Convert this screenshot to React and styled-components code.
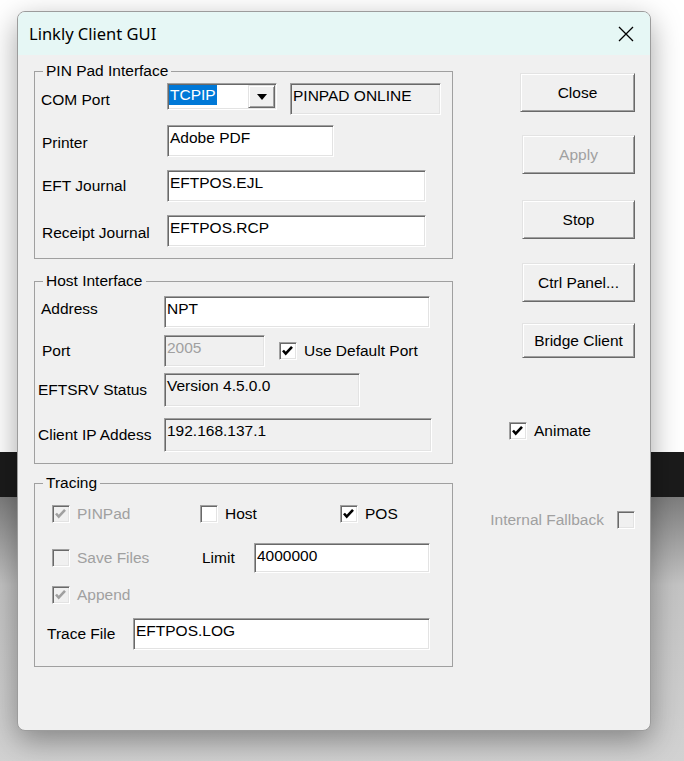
import React from 'react';
import styled, { createGlobalStyle } from 'styled-components';

const Global = createGlobalStyle`
  html, body { margin: 0; padding: 0; }
  body {
    width: 684px;
    height: 761px;
    overflow: hidden;
    background: linear-gradient(180deg, #ffffff 0, #ffffff 452px, #1b1b1b 452px, #1b1b1b 497px, #7e7e7e 497px, #c4c4c4 585px, #d2d2d2 761px);
    font-family: "Liberation Sans", Arial, sans-serif;
    font-size: 15.5px;
    color: #000;
  }
`;

const Page = styled.div`
  padding: 11px 0 0 17px;
`;

const Window = styled.div`
  box-sizing: border-box;
  width: 634px;
  height: 720px;
  border: 1px solid #9c9c9c;
  border-radius: 8px;
  background: #f0f0f0;
  box-shadow: 0 10px 30px rgba(0, 0, 0, 0.36);
  overflow: hidden;
  display: flex;
  flex-direction: column;
`;

const TitleBar = styled.div`
  flex: none;
  height: 43px;
  display: flex;
  align-items: center;
  justify-content: space-between;
  padding: 0 16px 0 11px;
  background: #e6f7f5;
`;

const Title = styled.span`
  font-family: "Noto Sans", "Open Sans", sans-serif;
  font-size: 16.5px;
  color: #000;
`;

const CloseX = styled.svg`
  width: 16px;
  height: 16px;
  display: block;
`;

const Body = styled.div`
  flex: 1;
  display: flex;
  justify-content: space-between;
  padding: 0 15px 0 16px;
`;

const LeftCol = styled.div`
  width: 419px;
  display: flex;
  flex-direction: column;
`;

const RightCol = styled.div`
  width: 150px;
  display: flex;
  flex-direction: column;
  align-items: flex-end;
`;

const Group = styled.div`
  margin-top: ${p => p.$mt}px;
  border: 1px solid #a0a0a0;
  padding-bottom: ${p => p.$pb}px;
`;

const GroupTitle = styled.div`
  width: fit-content;
  margin: -10px 0 0 8px;
  padding: 0 3px;
  background: #f0f0f0;
  line-height: 18px;
`;

const Row = styled.div`
  display: flex;
  align-items: center;
  height: ${p => p.$h}px;
  margin-top: ${p => p.$mt}px;
  padding-left: ${p => p.$pl}px;
`;

const Label = styled.span`
  flex: none;
  width: ${p => (p.$w ? `${p.$w}px` : 'auto')};
  margin-left: ${p => p.$ml || 0}px;
  margin-top: ${p => p.$nudge || 0}px;
  white-space: nowrap;
  color: ${p => (p.$disabled ? '#a0a0a0' : '#000')};
`;

const sunken = `
  border: 1px solid;
  border-color: #a0a0a0 #ffffff #ffffff #a0a0a0;
  box-shadow: inset 1px 1px 0 #696969, inset -1px -1px 0 #e3e3e3;
`;

const raised = `
  border: 1px solid;
  border-color: #e3e3e3 #696969 #696969 #e3e3e3;
  box-shadow: inset 1px 1px 0 #ffffff, inset -1px -1px 0 #a0a0a0;
`;

const Field = styled.div`
  box-sizing: border-box;
  flex: none;
  width: ${p => p.$w}px;
  height: ${p => p.$h}px;
  margin-left: ${p => p.$ml || 0}px;
  align-self: ${p => (p.$top ? 'flex-start' : 'center')};
  padding: 3px 2px 0 2px;
  line-height: 18px;
  white-space: nowrap;
  overflow: hidden;
  background: ${p => (p.$grey ? '#f0f0f0' : '#ffffff')};
  color: ${p => (p.$disabled ? '#a0a0a0' : '#000')};
  ${sunken}
`;

const Combo = styled.div`
  box-sizing: border-box;
  flex: none;
  width: 110px;
  height: 27px;
  align-self: flex-start;
  display: flex;
  padding: 1px;
  background: #ffffff;
  ${sunken}
`;

const ComboText = styled.div`
  flex: 1;
  display: flex;
  align-items: flex-start;
`;

const Selected = styled.span`
  height: 20px;
  line-height: 20px;
  padding: 0 1px;
  background: #0078d7;
  color: #ffffff;
`;

const ComboButton = styled.div`
  box-sizing: border-box;
  width: 27px;
  height: 23px;
  display: flex;
  align-items: center;
  justify-content: center;
  background: #f0f0f0;
  ${raised}
`;

const Btn = styled.button`
  box-sizing: border-box;
  flex: none;
  width: ${p => p.$w}px;
  height: ${p => p.$h}px;
  margin-top: ${p => p.$mt}px;
  padding: 0;
  font-family: "Liberation Sans", Arial, sans-serif;
  font-size: 15.5px;
  color: ${p => (p.disabled ? '#a0a0a0' : '#000')};
  background: #f0f0f0;
  ${raised}
`;

const CheckItem = styled.div`
  flex: none;
  display: flex;
  align-items: center;
  width: ${p => (p.$w ? `${p.$w}px` : 'auto')};
  margin-left: ${p => p.$ml || 0}px;
  margin-top: ${p => p.$mt || 0}px;
  align-self: ${p => p.$self || 'auto'};
  justify-content: ${p => p.$justify || 'flex-start'};
  gap: ${p => p.$gap || 7}px;
`;

const Box = styled.span`
  box-sizing: border-box;
  flex: none;
  width: 18px;
  height: 18px;
  display: inline-flex;
  align-items: center;
  justify-content: center;
  background: ${p => (p.$disabled ? '#f0f0f0' : '#ffffff')};
  ${sunken}
`;

const CheckText = styled.span`
  white-space: nowrap;
  color: ${p => (p.$disabled ? '#a0a0a0' : '#000')};
`;

const Tick = ({ color }) => (
  <svg width="16" height="16" viewBox="0 0 16 16">
    <polyline points="3,7.5 5.7,10.6 12,3.8" fill="none" stroke={color} strokeWidth="2.6" strokeLinejoin="miter" />
  </svg>
);

const Check = ({ label, checked, disabled, boxFirst = true, ...rest }) => {
  const box = (
    <Box $disabled={disabled}>
      {checked && <Tick color={disabled ? '#a0a0a0' : '#000'} />}
    </Box>
  );
  const text = <CheckText $disabled={disabled}>{label}</CheckText>;
  return (
    <CheckItem {...rest}>
      {boxFirst ? box : text}
      {boxFirst ? text : box}
    </CheckItem>
  );
};

export default function App() {
  return (
    <>
      <Global />
      <Page>
        <Window>
          <TitleBar>
            <Title>Linkly Client GUI</Title>
            <CloseX viewBox="0 0 16 16">
              <path d="M1 1 L15 15 M15 1 L1 15" stroke="#000" strokeWidth="1.3" fill="none" />
            </CloseX>
          </TitleBar>
          <Body>
            <LeftCol>
              <Group $mt={16} $pb={11}>
                <GroupTitle>PIN Pad Interface</GroupTitle>
                <Row $mt={3} $h={32} $pl={6}>
                  <Label $w={126} $nudge={1}>COM Port</Label>
                  <Combo>
                    <ComboText>
                      <Selected>TCPIP</Selected>
                    </ComboText>
                    <ComboButton>
                      <svg width="10" height="6" viewBox="0 0 10 6">
                        <polygon points="0,0 10,0 5,6" fill="#000" />
                      </svg>
                    </ComboButton>
                  </Combo>
                  <Field $w={151} $h={32} $ml={13} $top $grey>PINPAD ONLINE</Field>
                </Row>
                <Row $mt={10} $h={32} $pl={7}>
                  <Label $w={125} $nudge={3}>Printer</Label>
                  <Field $w={167} $h={32}>Adobe PDF</Field>
                </Row>
                <Row $mt={13} $h={32} $pl={7}>
                  <Label $w={125}>EFT Journal</Label>
                  <Field $w={259} $h={32}>EFTPOS.EJL</Field>
                </Row>
                <Row $mt={13} $h={32} $pl={7}>
                  <Label $w={125} $nudge={3}>Receipt Journal</Label>
                  <Field $w={259} $h={32}>EFTPOS.RCP</Field>
                </Row>
              </Group>

              <Group $mt={22} $pb={11}>
                <GroupTitle>Host Interface</GroupTitle>
                <Row $mt={6} $h={32} $pl={6}>
                  <Label $w={123} $nudge={-6}>Address</Label>
                  <Field $w={266} $h={32}>NPT</Field>
                </Row>
                <Row $mt={7} $h={32} $pl={7}>
                  <Label $w={122}>Port</Label>
                  <Field $w={101} $h={32} $grey $disabled>2005</Field>
                  <Check $ml={14} checked label="Use Default Port" />
                </Row>
                <Row $mt={6} $h={34} $pl={3}>
                  <Label $w={126}>EFTSRV Status</Label>
                  <Field $w={196} $h={34} $grey>Version 4.5.0.0</Field>
                </Row>
                <Row $mt={11} $h={34} $pl={3}>
                  <Label $w={126}>Client IP Addess</Label>
                  <Field $w={268} $h={34} $grey>192.168.137.1</Field>
                </Row>
              </Group>

              <Group $mt={19} $pb={16}>
                <GroupTitle>Tracing</GroupTitle>
                <Row $mt={13} $h={18} $pl={17}>
                  <Check $w={148} checked disabled label="PINPad" />
                  <Check $w={140} label="Host" />
                  <Check checked label="POS" />
                </Row>
                <Row $mt={20} $h={30} $pl={17}>
                  <Check $w={150} disabled label="Save Files" />
                  <Label $w={52}>Limit</Label>
                  <Field $w={176} $h={30}>4000000</Field>
                </Row>
                <Row $mt={13} $h={18} $pl={17}>
                  <Check checked disabled label="Append" />
                </Row>
                <Row $mt={14} $h={32} $pl={12}>
                  <Label $w={86}>Trace File</Label>
                  <Field $w={297} $h={32}>EFTPOS.LOG</Field>
                </Row>
              </Group>
            </LeftCol>

            <RightCol>
              <Btn $w={115} $h={39} $mt={18}>Close</Btn>
              <Btn $w={113} $h={39} $mt={23} disabled>Apply</Btn>
              <Btn $w={113} $h={39} $mt={26}>Stop</Btn>
              <Btn $w={113} $h={39} $mt={24}>Ctrl Panel...</Btn>
              <Btn $w={113} $h={35} $mt={21}>Bridge Client</Btn>
              <Check $self="flex-start" $ml={24} $mt={64} checked label="Animate" />
              <Check $self="stretch" $justify="flex-end" $gap={13} $mt={71} boxFirst={false} disabled label="Internal Fallback" />
            </RightCol>
          </Body>
        </Window>
      </Page>
    </>
  );
}
